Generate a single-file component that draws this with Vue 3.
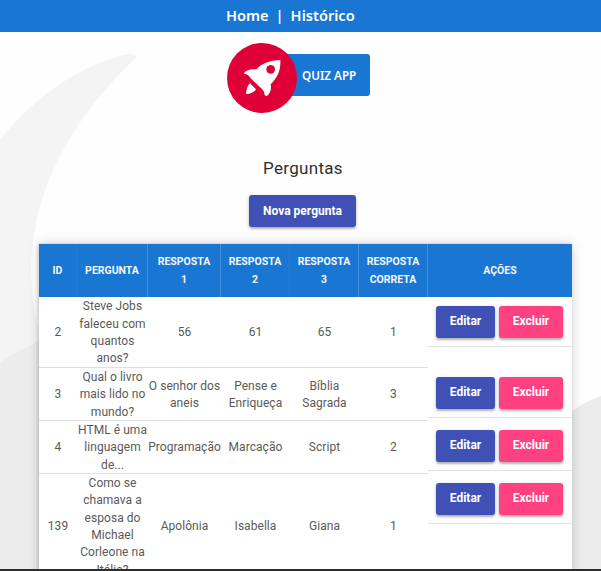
<script setup>
const headers = [
  ['ID'],
  ['PERGUNTA'],
  ['RESPOSTA', '1'],
  ['RESPOSTA', '2'],
  ['RESPOSTA', '3'],
  ['RESPOSTA', 'CORRETA'],
  ['AÇÕES'],
]

const questions = [
  { id: 2, lines: ['Steve Jobs', 'faleceu com', 'quantos', 'anos?'], answers: [['56'], ['61'], ['65']], correct: 1 },
  { id: 3, lines: ['Qual o livro', 'mais lido no', 'mundo?'], answers: [['O senhor dos', 'aneis'], ['Pense e', 'Enriqueça'], ['Bíblia', 'Sagrada']], correct: 3 },
  { id: 4, lines: ['HTML é uma', 'linguagem', 'de...'], answers: [['Programação'], ['Marcação'], ['Script']], correct: 2 },
  { id: 139, lines: ['Como se', 'chamava a', 'esposa do', 'Michael', 'Corleone na', 'Itália?'], answers: [['Apolônia'], ['Isabella'], ['Giana']], correct: 1 },
]
</script>

<template>
  <div class="page">
    <svg class="backdrop" viewBox="0 0 601 571" aria-hidden="true">
      <path fill="#f4f4f4" d="M0 140C35 97 79 65 128 54Q136 54 137 57C77 112 32 185 31 270Q32 335 65 400L0 500Z" />
      <path fill="#ececec" d="M0 363Q13 353 28 347Q48 333 85 330L480 470L572 411Q586 401 601 396V571H0Z" />
    </svg>
    <nav class="topbar">
      <a>Home</a><span class="divider">|</span><a>Histórico</a>
    </nav>
    <main class="content">
      <div class="brand">
        <svg class="emblem" viewBox="0 0 210 210" aria-hidden="true">
          <circle cx="105" cy="105" r="105" fill="#df0037" />
          <path fill="#fff" d="M160 51C136 51 105 59 88 79C72 77 58 80 51 90C51 93 56 93 61 95C67 98 68 103 73 108L105 138C110 143 112 148 112 153C114 159 119 161 122 157C130 149 134 139 131 124C151 105 162 82 160 51Z" />
          <circle cx="131" cy="79" r="13" fill="#df0037" />
          <path fill="#fff" d="M69 121C60 128 59 143 57 150Q57 154 62 153C71 152 83 147 87 139Z" />
        </svg>
        <span class="brand-name">QUIZ APP</span>
      </div>
      <h1>Perguntas</h1>
      <button class="btn primary create">Nova pergunta</button>
      <table>
        <colgroup>
          <col class="c-id"><col class="c-question"><col class="c-first"><col class="c-second"><col class="c-third"><col class="c-correct"><col class="c-actions">
        </colgroup>
        <thead>
          <tr>
            <th v-for="(h, i) in headers" :key="i"><div v-for="line in h" :key="line">{{ line }}</div></th>
          </tr>
        </thead>
        <tbody>
          <tr v-for="q in questions" :key="q.id">
            <td>{{ q.id }}</td>
            <td><div v-for="line in q.lines" :key="line">{{ line }}</div></td>
            <td v-for="(a, i) in q.answers" :key="i"><div v-for="line in a" :key="line">{{ line }}</div></td>
            <td>{{ q.correct }}</td>
            <td class="actions">
              <div class="action-row">
                <button class="btn primary edit">Editar</button>
                <button class="btn danger">Excluir</button>
              </div>
            </td>
          </tr>
        </tbody>
      </table>
    </main>
    <div class="bottom-edge"></div>
  </div>
</template>

<style>
body {
  margin: 0;
  overflow: hidden;
}
</style>

<style scoped>
.page {
  position: relative;
  display: flex;
  flex-direction: column;
  width: 601px;
  height: 571px;
  overflow: hidden;
  background: #fefefe;
  font-family: Roboto, sans-serif;
}
.backdrop {
  position: absolute;
  inset: 0;
  width: 601px;
  height: 571px;
}
.topbar {
  position: relative;
  flex: none;
  display: flex;
  box-sizing: border-box;
  height: 32px;
  padding-left: 226px;
  background: #1976d2;
  color: #fff;
  font: 600 14.6px/31px "Noto Sans", sans-serif;
}
.divider {
  width: 22px;
  text-align: center;
}
.content {
  position: relative;
  flex: 1;
  min-height: 0;
  overflow: hidden;
  display: flex;
  flex-direction: column;
}
.brand {
  flex: none;
  display: flex;
  align-items: center;
  height: 70px;
  margin: 11px 0 0 227px;
}
.emblem {
  position: relative;
  z-index: 1;
  width: 70px;
  height: 70px;
}
.brand-name {
  box-sizing: border-box;
  width: 108px;
  height: 42px;
  margin: -6px 0 0 -35px;
  padding-left: 40px;
  border-radius: 3px;
  background: #1976d2;
  color: #fff;
  font: 600 11.7px/43px "Noto Sans", sans-serif;
  white-space: nowrap;
}
h1 {
  flex: none;
  margin: 43px 0 0 5px;
  color: #303030;
  font-size: 17px;
  font-weight: 400;
  line-height: 24px;
  letter-spacing: 0.3px;
  text-align: center;
}
.btn {
  flex: none;
  box-sizing: border-box;
  height: 32px;
  padding: 0 0 2px;
  border: 0;
  border-radius: 3px;
  color: #fff;
  font: 700 12px/28px Roboto, sans-serif;
  text-align: center;
  box-shadow: 0 2px 2px rgba(0, 0, 0, 0.22), 0 1px 4px rgba(0, 0, 0, 0.15);
}
.primary {
  background: #3f51b5;
}
.danger {
  width: 64px;
  background: #ff4081;
}
.edit {
  width: 59px;
}
.create {
  width: 107px;
  margin: 15px 0 0 249px;
  padding-bottom: 0;
}
table {
  flex: none;
  width: 533px;
  margin: 17px 0 0 39px;
  table-layout: fixed;
  border-collapse: separate;
  border-spacing: 0;
  background: #fff;
  box-shadow: 0 0 12px rgba(0, 0, 0, 0.16), -1px 0 3px rgba(0, 0, 0, 0.16);
}
.c-id { width: 38px; }
.c-question { width: 71px; }
.c-first { width: 73px; }
.c-second { width: 69px; }
.c-third { width: 69px; }
.c-correct { width: 69px; }
.c-actions { width: 144px; }
th,
td {
  box-sizing: border-box;
  padding: 0;
  text-align: center;
  vertical-align: middle;
  white-space: nowrap;
}
th {
  height: 53px;
  background: #1976d2;
  border-right: 1px solid #1f7cd8;
  color: #f1f7ff;
  font-size: 10.5px;
  font-weight: 700;
  line-height: 18px;
}
th:nth-child(2),
th:nth-child(3),
th:nth-child(5),
th:nth-child(6) {
  border-right-color: #4792df;
}
th:last-child {
  border-right: 0;
}
td {
  padding-top: 1px;
  box-shadow: inset 0 -1px #e0e0e0;
  color: #5a5a5a;
  font-size: 12px;
  line-height: 17.33px;
  letter-spacing: 0.05px;
}
tbody tr {
  height: 53px;
}
tbody tr:first-child {
  height: 71px;
}
tbody tr:last-child {
  height: 105px;
}
td.actions {
  padding-top: 0;
  box-shadow: none;
  vertical-align: top;
}
.action-row {
  display: flex;
  align-items: flex-start;
  gap: 4px;
  box-sizing: border-box;
  height: 50px;
  padding: 9px 0 0 8px;
  border-bottom: 1px solid #e2e2e2;
}
.bottom-edge {
  position: relative;
  flex: none;
  height: 2px;
  background: #2c2c2c;
}
</style>
